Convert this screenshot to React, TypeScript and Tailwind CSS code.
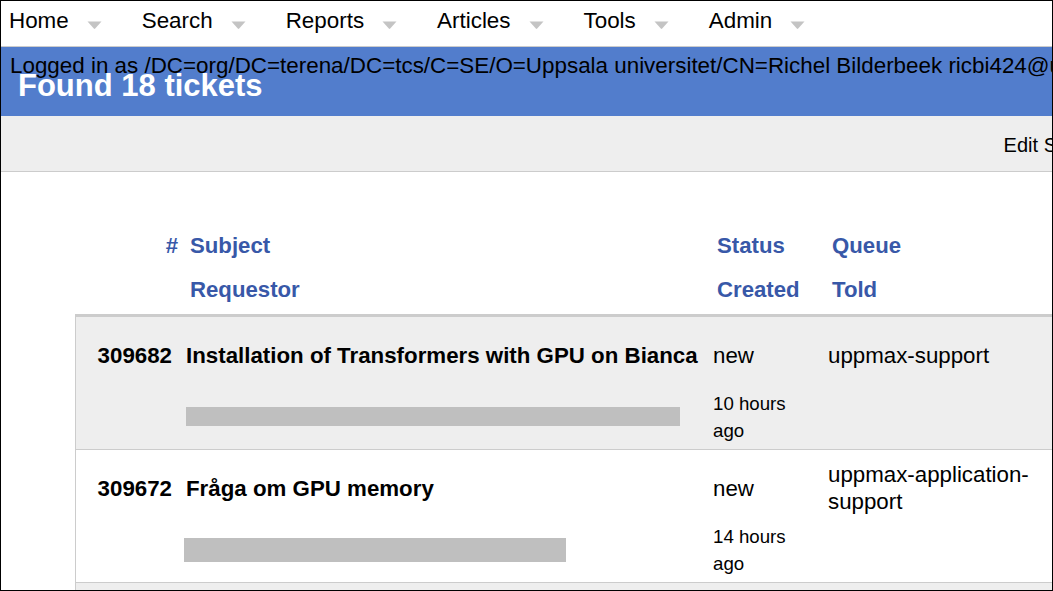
const navItems = ["Home", "Search", "Reports", "Articles", "Tools", "Admin"];

type Ticket = {
  id: string;
  subject: string;
  status: string;
  queue: string;
  created: string;
  bar: { w: number; h: number; mt: number; ml: number };
};

const tickets: Ticket[] = [
  {
    id: "309682",
    subject: "Installation of Transformers with GPU on Bianca",
    status: "new",
    queue: "uppmax-support",
    created: "10 hours ago",
    bar: { w: 494, h: 19, mt: 17, ml: 0 },
  },
  {
    id: "309672",
    subject: "Fråga om GPU memory",
    status: "new",
    queue: "uppmax-application-support",
    created: "14 hours ago",
    bar: { w: 382, h: 24, mt: 15, ml: -2 },
  },
];

function Caret() {
  return (
    <svg className="ml-[18px] mt-[13px] shrink-0" width="15" height="8" viewBox="0 0 15 8">
      <path d="M0.5 0.5H14.5L8.2 7.6Q7.5 8.3 6.8 7.6Z" fill="#c4c4c4" />
    </svg>
  );
}

export default function App() {
  return (
    <div className="w-[1053px] h-[591px] border border-black overflow-hidden bg-white text-black font-['Liberation_Sans',Arial,sans-serif]">
      <div className="w-[1140px]">
        {/* Menu */}
        <nav className="h-[46px] border-b border-[#cccccc] flex items-start pl-[8px] pt-[7px] text-[22.4px] leading-[25px]">
          {navItems.map((item) => (
            <div key={item} className="flex items-start mr-[40px]">
              <span>{item}</span>
              <Caret />
            </div>
          ))}
        </nav>

        {/* Header */}
        <div className="relative h-[69px] bg-[#527dcc] pl-[17px] pt-[21px]">
          <div className="absolute left-[9px] top-[6px] whitespace-nowrap text-[22.4px] leading-[25px]">
            Logged in as /DC=org/DC=terena/DC=tcs/C=SE/O=Uppsala universitet/CN=Richel Bilderbeek ricbi424@uu.se
          </div>
          <h1 className="relative text-white font-bold text-[31px] leading-[36px]">Found 18 tickets</h1>
        </div>

        {/* Page menu */}
        <div className="h-[56px] bg-[#eeeeee] border-b border-[#cccccc] flex items-center justify-end pt-[3px] pr-[34px] text-[20px]">
          Edit Search
        </div>

        {/* Ticket list */}
        <div className="ml-[74px] mt-[51px]">
          <div className="text-[#3858a8] font-bold text-[22.2px] leading-[25px] border-l border-transparent">
            <div className="flex h-[44px] items-center">
              <div className="w-[104px] text-right pr-[2px]">#</div>
              <div className="w-[527px] pl-[10px]">Subject</div>
              <div className="w-[115px] pl-[10px]">Status</div>
              <div className="w-[217px] pl-[10px]">Queue</div>
            </div>
            <div className="flex h-[44px] items-center">
              <div className="w-[104px]" />
              <div className="w-[527px] pl-[10px]">Requestor</div>
              <div className="w-[115px] pl-[10px]">Created</div>
              <div className="w-[217px] pl-[10px]">Told</div>
            </div>
          </div>

          <div className="mt-[3px] border-t-[3px] border-[#cccccc]">
            {tickets.map((t, i) => (
              <div
                key={t.id}
                className={`border-l border-b border-[#cccccc] pt-[11px] pb-[5px] ${i % 2 === 0 ? "bg-[#eeeeee]" : "bg-white"}`}
              >
                <div className="flex h-[54px] items-center text-[22.3px] leading-[27px]">
                  <div className="w-[104px] text-right pr-[8px] font-bold">{t.id}</div>
                  <div className="w-[527px] pl-[6px] font-bold">{t.subject}</div>
                  <div className="w-[115px] pl-[6px]">{t.status}</div>
                  <div className="w-[217px] pl-[6px] pr-[6px]">{t.queue}</div>
                </div>
                <div className="flex h-[62px] items-start pt-[8px]">
                  <div className="w-[104px]" />
                  <div className="w-[527px] pl-[6px]">
                    <div
                      className="bg-[#bfbfbf]"
                      style={{ width: t.bar.w, height: t.bar.h, marginTop: t.bar.mt, marginLeft: t.bar.ml }}
                    />
                  </div>
                  <div className="w-[115px] pl-[6px] pr-[6px] text-[18.67px] leading-[27px]">{t.created}</div>
                  <div className="w-[217px]" />
                </div>
              </div>
            ))}
            <div className="h-[132px] border-l border-[#cccccc] bg-[#eeeeee]" />
          </div>
        </div>
      </div>
    </div>
  );
}
